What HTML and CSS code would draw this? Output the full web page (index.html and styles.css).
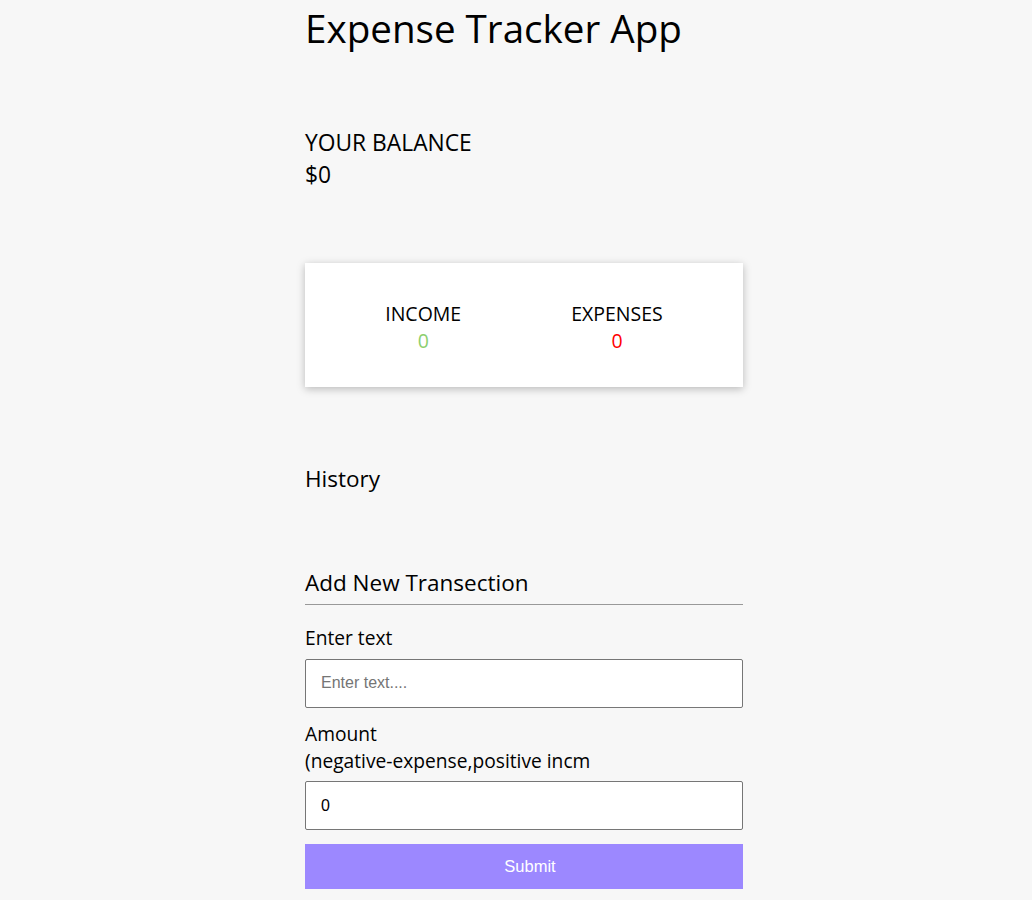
FILE: index.html
```html
<!DOCTYPE html>
<html lang="en">
<head>
  <meta charset="UTF-8" />
  <meta name="viewport" content="width=device-width, initial-scale=1.0" />
  <title>Expense Tracker App</title>
  <link rel="stylesheet" href="styles.css">
</head>
<body>
  <div class="container">
    <h1>Expense Tracker App</h1>

    <div class="balance">
      <h4>YOUR BALANCE</h4>
      <p id="balance">$0</p>
    </div>

    <div class="inc-exp">
      <div class="col">
        <h4>INCOME</h4>
        <p class="money plus" id="income">0</p>
      </div>
      <div class="col">
        <h4>EXPENSES</h4>
        <p class="money minus" id="expense">0</p>
      </div>
    </div>

    <h3 class="history">History</h3>
    <ul class="list" id="list"></ul>

    <h3 class="add-title">Add New Transection</h3>
    <form id="form">
      <div class="form-control">
        <label for="text">Enter text</label>
        <input type="text" id="text" placeholder="Enter text....">
      </div>
      <div class="form-control">
        <label for="amount">Amount<br>(negative-expense,positive incm</label>
        <input type="number" id="amount" value="0">
      </div>
      <button class="btn" type="button">Submit</button>
    </form>
  </div>
</body>
</html>
```

FILE: styles.css
```css
body {
    font-family: "Open Sans", sans-serif;
    background-color: #f7f7f7;
    color: #000;
    margin: 0;
    padding-left: 16px;
}

.container {
    width: 438px;
    margin: 0 auto;
}

h1 {
    font-size: 38.6px;
    font-weight: 400;
    line-height: 56px;
    margin: 0;
}

.balance {
    margin-top: 71px;
}

.balance h4,
.balance p {
    font-size: 22.8px;
    font-weight: 400;
    line-height: 31.5px;
    margin: 0;
}

.inc-exp {
    background-color: #fff;
    box-shadow: 0 2px 8px rgba(0, 0, 0, 0.25);
    margin-top: 73px;
    height: 124px;
    display: flex;
    justify-content: center;
    align-items: center;
    gap: 110px;
    text-align: center;
}

.col {
    padding-top: 3px;
}

.col h4,
.col p {
    font-size: 19.5px;
    font-weight: 400;
    line-height: 27px;
    margin: 0;
}

.money.plus {
    color: #8ccf6e;
}

.money.minus {
    color: #ff0000;
}

.history,
.add-title {
    font-size: 22.5px;
    font-weight: 400;
    line-height: 30px;
    margin: 0;
}

.history {
    margin-top: 77px;
}

.list {
    margin: 0;
    padding: 0;
    list-style: none;
    height: 74px;
}

.add-title {
    padding-bottom: 6px;
    border-bottom: 1px solid #999;
}

.form-control {
    margin-top: 13.5px;
}

.form-control:first-child {
    margin-top: 20px;
}

label {
    display: block;
    font-size: 19.2px;
    line-height: 26.5px;
    margin-bottom: 7px;
}

input {
    display: block;
    box-sizing: border-box;
    width: 100%;
    height: 49px;
    border: 1px solid #767676;
    border-radius: 2px;
    padding: 0 15px;
    font-family: "Liberation Sans", Arial, sans-serif;
    font-size: 16px;
}

.btn {
    display: block;
    width: 100%;
    height: 45px;
    margin-top: 14px;
    padding: 0 0 0 12px;
    background-color: #9c88ff;
    color: #fff;
    border: none;
    font-family: "Liberation Sans", Arial, sans-serif;
    font-size: 16.5px;
    cursor: pointer;
}
```
